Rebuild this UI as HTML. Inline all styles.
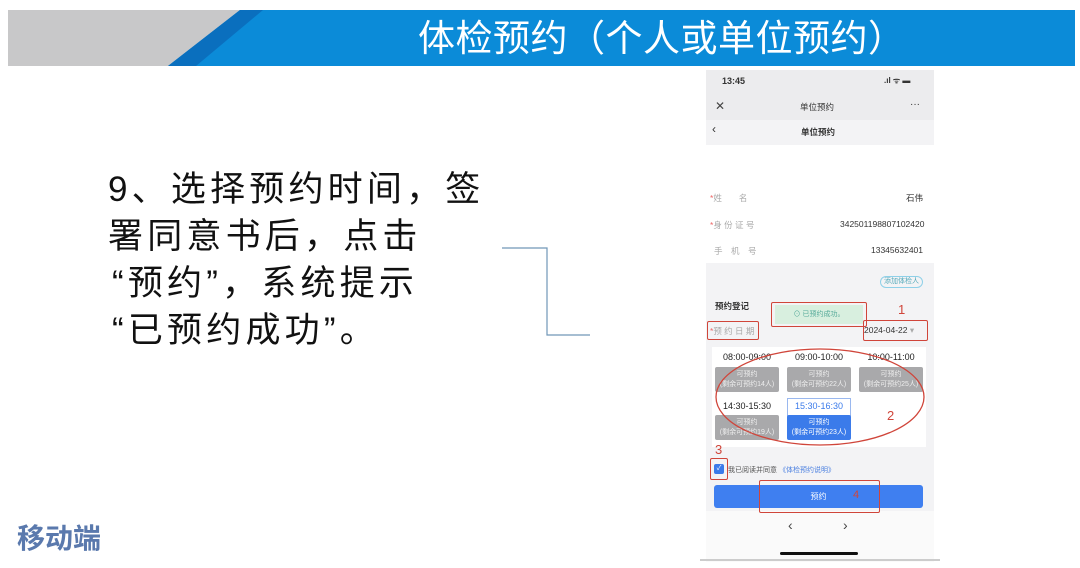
<!DOCTYPE html>
<html><head><meta charset="utf-8"><style>
*{margin:0;padding:0;box-sizing:border-box}
body{width:1080px;height:568px;background:#fff;position:relative;overflow:hidden;font-family:"Liberation Sans","Noto Sans CJK SC",sans-serif}
.a{position:absolute}
.t{position:absolute;white-space:nowrap}
.main{font-size:35px;color:#111;letter-spacing:4.2px;line-height:47px}
.ph{font-size:8.5px;color:#333}
.slot{position:absolute;width:64px;height:25px;background:#a9a9ab;color:#eee;font-size:7px;text-align:center;line-height:10px;padding-top:3px;border-radius:2px}
.tm{position:absolute;width:64px;text-align:center;font-size:9px;color:#222}
.rb{position:absolute;border:1.5px solid #d0453a;border-radius:2px}
.rn{position:absolute;color:#d0453a;font-size:13px}
</style></head><body>
<div class="a" style="left:8px;top:10px;width:1067px;height:56px;background:#c8c8c9"></div>
<svg class="a" style="left:8px;top:10px" width="1067" height="56"><polygon points="232,0 1067,0 1067,56 160,56" fill="#0b8bd8"/><polygon points="232,0 255,0 188,56 160,56" fill="#0a6fbe"/></svg>
<div class="t" style="left:418px;top:15px;font-size:37px;letter-spacing:0.5px;color:#fff;line-height:48px">体检预约（个人或单位预约）</div>
<div class="t main" style="left:108px;top:166px">9、选择预约时间，签</div>
<div class="t main" style="left:108px;top:213px">署同意书后，点击</div>
<div class="t main" style="left:112px;top:260px">“预约”，系统提示</div>
<div class="t main" style="left:112px;top:307px">“已预约成功”。</div>
<svg class="a" style="left:0;top:0" width="600" height="400"><polyline points="502,248 547,248 547,335 590,335" fill="none" stroke="#7096b8" stroke-width="1.2"/></svg>
<div class="t" style="left:17px;top:521px;font-size:28px;font-weight:bold;color:#5a79ad;line-height:36px">移动端</div>
<div class="a" style="left:706px;top:70px;width:228px;height:492px;background:#fafafa"></div>
<div class="a" style="left:706px;top:70px;width:228px;height:50px;background:#ececee"></div>
<div class="a" style="left:706px;top:120px;width:228px;height:25px;background:#f3f3f5"></div>
<div class="a" style="left:706px;top:145px;width:228px;height:118px;background:#fff"></div>
<div class="t ph" style="left:722px;top:76px;font-weight:bold;font-size:9px">13:45</div>
<div class="t ph" style="left:884px;top:75px;font-size:8px;font-weight:bold">.ıl ᯤ ▬</div>
<div class="t ph" style="left:715px;top:99px;font-size:12px;color:#444">✕</div>
<div class="t ph" style="left:800px;top:101px">单位预约</div>
<div class="t ph" style="left:910px;top:99px;font-size:10px">···</div>
<div class="t ph" style="left:712px;top:122px;font-size:12px">‹</div>
<div class="t ph" style="left:801px;top:126px;font-weight:bold">单位预约</div>
<div class="t ph" style="left:710px;top:192px;color:#aaa"><span style="color:#e66">*</span>姓　　名</div>
<div class="t ph" style="left:906px;top:192px">石伟</div>
<div class="t ph" style="left:710px;top:219px;color:#aaa"><span style="color:#e66">*</span>身 份 证 号</div>
<div class="t ph" style="left:840px;top:219px">342501198807102420</div>
<div class="t ph" style="left:714px;top:245px;color:#aaa">手　机　号</div>
<div class="t ph" style="left:871px;top:245px">13345632401</div>
<div class="a" style="left:706px;top:263px;width:228px;height:248px;background:#f3f3f5"></div>
<div class="a" style="left:880px;top:276px;width:43px;height:12px;border:1px solid #8fd0e8;border-radius:6px;font-size:7px;color:#5ab;text-align:center;line-height:10px">添加体检人</div>
<div class="t ph" style="left:715px;top:300px;font-weight:bold">预约登记</div>
<div class="a" style="left:775px;top:305px;width:88px;height:19px;background:#d8efdf;font-size:7px;color:#5a9;text-align:center;line-height:19px">⊙ 已预约成功。</div>
<div class="t ph" style="left:710px;top:325px;color:#aaa"><span style="color:#e66">*</span>预 约 日 期</div>
<div class="t ph" style="left:864px;top:325px">2024-04-22 <span style="color:#aaa">▾</span></div>
<div class="a" style="left:712px;top:347px;width:214px;height:100px;background:#fff"></div>
<div class="tm" style="left:715px;top:352px">08:00-09:00</div>
<div class="tm" style="left:787px;top:352px">09:00-10:00</div>
<div class="tm" style="left:859px;top:352px">10:00-11:00</div>
<div class="slot" style="left:715px;top:367px">可预约<br>(剩余可预约14人)</div>
<div class="slot" style="left:787px;top:367px">可预约<br>(剩余可预约22人)</div>
<div class="slot" style="left:859px;top:367px">可预约<br>(剩余可预约25人)</div>
<div class="tm" style="left:715px;top:401px">14:30-15:30</div>
<div class="a" style="left:787px;top:398px;width:64px;height:18px;border:1px solid #9ab8ef;border-bottom:none"></div>
<div class="tm" style="left:787px;top:401px;color:#3b7bea">15:30-16:30</div>
<div class="slot" style="left:715px;top:415px">可预约<br>(剩余可预约19人)</div>
<div class="slot" style="left:787px;top:415px;background:#3b7bea;color:#fff">可预约<br>(剩余可预约23人)</div>
<div class="a" style="left:706px;top:452px;width:228px;height:58px;background:#f3f3f5"></div>
<div class="a" style="left:714px;top:464px;width:10px;height:10px;background:#3b7bea;border-radius:2px;color:#fff;font-size:7px;text-align:center;line-height:10px">✓</div>
<div class="t" style="left:728px;top:465px;font-size:7px;color:#555">我已阅读并同意 <span style="color:#4a7fe0">《体检预约说明》</span></div>
<div class="a" style="left:714px;top:485px;width:209px;height:23px;background:#3f7ff0;border-radius:3px;color:#fff;font-size:8px;text-align:center;line-height:23px">预约</div>
<div class="t ph" style="left:788px;top:517px;font-size:14px;color:#444">‹</div>
<div class="t ph" style="left:843px;top:517px;font-size:14px;color:#444">›</div>
<div class="a" style="left:780px;top:552px;width:78px;height:3px;background:#111;border-radius:2px"></div>
<div class="a" style="left:700px;top:559px;width:240px;height:2px;background:#ccc"></div>
<div class="rb" style="left:771px;top:302px;width:96px;height:25px"></div>
<div class="rb" style="left:707px;top:321px;width:52px;height:19px"></div>
<div class="rb" style="left:863px;top:320px;width:65px;height:21px"></div>
<svg class="a" style="left:700px;top:340px" width="240" height="115"><ellipse cx="120" cy="57" rx="104" ry="48" fill="none" stroke="#d0453a" stroke-width="1.3"/></svg>
<div class="rb" style="left:710px;top:458px;width:18px;height:22px"></div>
<div class="rb" style="left:759px;top:480px;width:121px;height:33px"></div>
<div class="rn" style="left:898px;top:302px">1</div>
<div class="rn" style="left:887px;top:408px">2</div>
<div class="rn" style="left:715px;top:442px">3</div>
<div class="rn" style="left:853px;top:489px;font-size:11px">4</div>
</body></html>
